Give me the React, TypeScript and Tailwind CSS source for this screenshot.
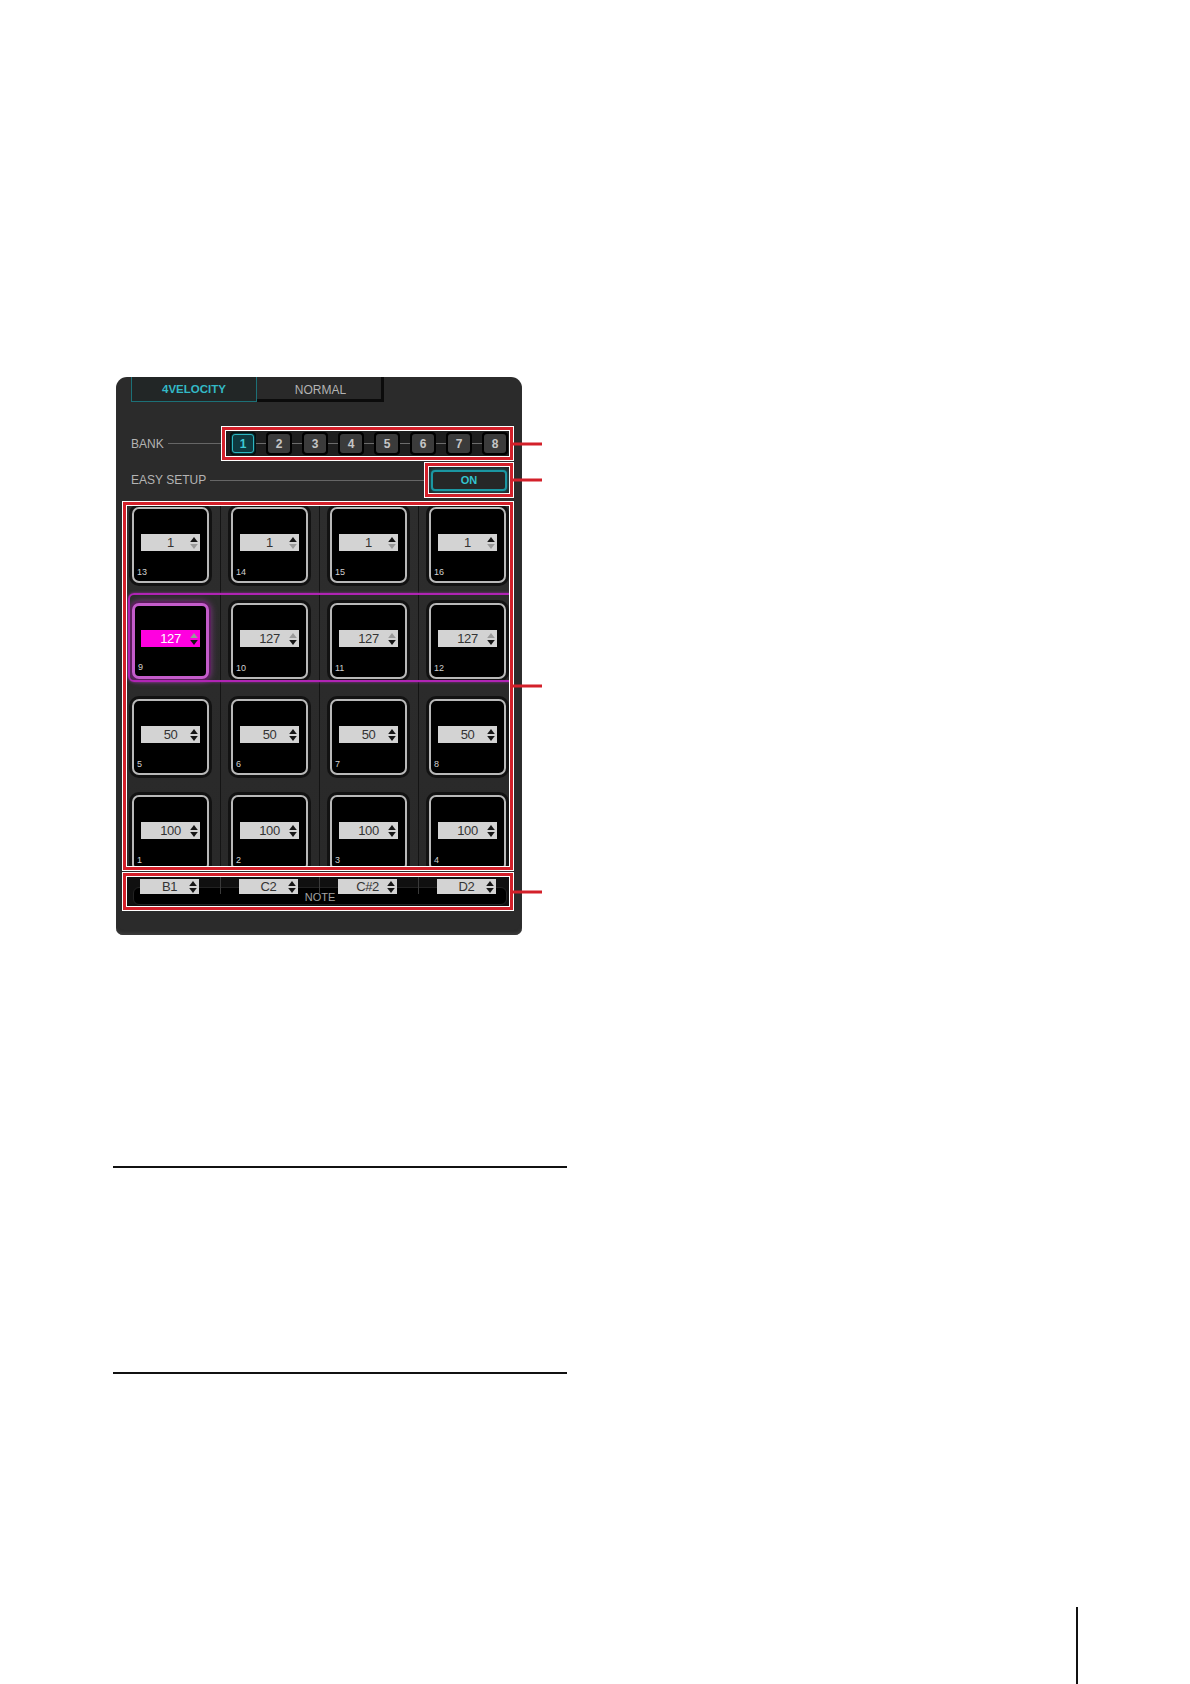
import React from "react";

const FONT = "font-['Liberation_Sans',Arial,sans-serif]";

function Spin({ up = "#151515", down = "#151515" }: { up?: string; down?: string }) {
  return (
    <svg width="8" height="13" viewBox="0 0 8 13" className="block">
      <path d="M4 0.5 L7.8 5.5 L0.2 5.5 Z" fill={up} />
      <path d="M0.2 7.5 L7.8 7.5 L4 12.5 Z" fill={down} />
    </svg>
  );
}

function ValueBox({
  value,
  up,
  down,
  selected = false,
  h = "h-[17px]",
}: {
  value: string;
  up?: string;
  down?: string;
  selected?: boolean;
  h?: string;
}) {
  return (
    <div
      className={`relative w-[59px] ${h} flex items-center justify-center ${
        selected ? "bg-[#ff00e0] text-white" : "bg-[#d3d3d3] text-[#333]"
      }`}
    >
      <span className="text-[13px] leading-none tracking-[-0.4px]">{value}</span>
      <div className="absolute right-[2px] top-1/2 -translate-y-1/2">
        <Spin up={up} down={down} />
      </div>
    </div>
  );
}

function RedBox({
  className = "",
  children,
}: {
  className?: string;
  children?: React.ReactNode;
}) {
  return (
    <div className={`relative border-[3px] border-[#d3202a] ring-1 ring-white ${className}`}>
      <div className="w-full h-full border border-white">{children}</div>
      <div className="absolute left-[calc(100%+3px)] top-1/2 -translate-y-1/2 w-[29px] h-[3px] bg-[#d3202a]" />
    </div>
  );
}

type PadData = { n: number; v: string; up?: string; down?: string; sel?: boolean };

const GRAY = "#9a9a9a";

const rows: PadData[][] = [
  [13, 14, 15, 16].map((n) => ({ n, v: "1", down: GRAY })),
  [9, 10, 11, 12].map((n) => ({ n, v: "127", up: GRAY, sel: n === 9 })),
  [5, 6, 7, 8].map((n) => ({ n, v: "50" })),
  [1, 2, 3, 4].map((n) => ({ n, v: "100" })),
];

function Pad({ p }: { p: PadData }) {
  return (
    <div
      className={`w-[77px] h-[76px] shrink-0 rounded-[7px] bg-black flex flex-col items-center ${
        p.sel
          ? "border-[3px] border-[#c45ccb] shadow-[0_0_0_2px_#5a1f5c,0_0_6px_2px_rgba(190,70,200,0.55)] pt-[24px]"
          : "border-2 border-[#b9b9b9] shadow-[0_0_0_3px_#121212] pt-[25px]"
      }`}
    >
      <ValueBox value={p.v} up={p.up} down={p.down} selected={p.sel} />
      <span className="self-start mt-auto pl-[3px] pb-[4px] text-[9px] leading-none text-[#d0d0d0]">
        {p.n}
      </span>
    </div>
  );
}

function Panel() {
  const cols = [0, 1, 2, 3];
  const notes = ["B1", "C2", "C#2", "D2"];
  return (
    <div
      className={`${FONT} w-[406px] h-[558px] rounded-t-[11px] rounded-b-[7px] bg-[#2b2b2b] flex flex-col shadow-[inset_0_-3px_3px_-1px_#3c3c3c]`}
    >
      {/* tabs */}
      <div className="flex pl-[15px] h-[25px] shrink-0">
        <div className="w-[126px] h-full border border-t-0 border-[#1c7077] bg-[#222626] flex items-center justify-center pt-[2px] text-[11.5px] font-bold text-[#33b9c5]">
          4VELOCITY
        </div>
        <div className="w-[127px] h-full border-r-[3px] border-b-[3px] border-[#0b0b0b] bg-[#292929] flex items-center justify-center pt-[3px] text-[12px] text-[#b3b3b3] pl-[3px]">
          NORMAL
        </div>
      </div>

      {/* BANK */}
      <div className="mt-[25px] h-[33px] flex items-center pl-[15px] pr-[9px] shrink-0">
        <span className="text-[12px] text-[#b4b4b4] leading-none">BANK</span>
        <div className="flex-1 h-px bg-[#666] ml-[4px]" />
        <RedBox className="w-[291px] h-[33px]">
          <div className="w-full h-full bg-[#1e1e1e] flex items-center pl-[4px]">
            {[1, 2, 3, 4, 5, 6, 7, 8].map((n, i) => (
              <React.Fragment key={n}>
                {i > 0 && <div className="w-[10px] h-px bg-[#6c6c6c]" />}
                <div className="p-[2px] rounded-[4px] bg-black">
                  <div
                    className={`w-[22px] h-[19px] rounded-[3px] flex items-center justify-center text-[12px] font-bold leading-none ${
                      n === 1
                        ? "border-[1.5px] border-[#2cb6c1] bg-[#0e3a40] text-[#3ccad6] shadow-[0_0_3px_#1b8d96]"
                        : "bg-[#3b3b3b] text-[#c6c6c6]"
                    }`}
                  >
                    {n}
                  </div>
                </div>
              </React.Fragment>
            ))}
          </div>
        </RedBox>
      </div>

      {/* EASY SETUP */}
      <div className="mt-[3px] h-[34px] flex items-center pl-[15px] pr-[9px] shrink-0">
        <span className="text-[12px] text-[#b4b4b4] leading-none">EASY SETUP</span>
        <div className="flex-1 h-px bg-[#666] ml-[4px]" />
        <RedBox className="w-[88px] h-[34px]">
          <div className="w-full h-full bg-[#232323] flex items-center justify-center">
            <div className="w-[76px] h-[21px] rounded-[4px] border-2 border-[#1b97a2] bg-[#262727] shadow-[0_0_4px_#157a83] flex items-center justify-center text-[11px] font-bold text-[#33c3cf] leading-none">
              ON
            </div>
          </div>
        </RedBox>
      </div>

      {/* Pads grid */}
      <div className="mt-[5px] ml-[7px] shrink-0">
        <RedBox className="w-[390px] h-[368px]">
          <div className="relative w-full h-full overflow-hidden bg-[#2a2a2a]">
            <div className="flex ml-[-6px] h-full">
              {cols.map((c) => (
                <div
                  key={c}
                  className={`w-[99px] shrink-0 h-full flex flex-col gap-[20px] pt-[1px] bg-gradient-to-b from-[#2d2d2d] to-[#292929] ${
                    c === 0 ? "pl-[11px]" : "pl-[10px] border-l border-[#141414]"
                  }`}
                >
                  {rows.map((r, ri) => (
                    <Pad key={ri} p={r[c]} />
                  ))}
                </div>
              ))}
            </div>
            <div className="absolute left-[1px] top-[87px] w-[392px] h-[89px] rounded-[6px] border-2 border-[#b024b4] shadow-[0_0_3px_rgba(200,60,210,0.6)] pointer-events-none" />
          </div>
        </RedBox>
      </div>

      {/* NOTE row */}
      <div className="mt-[3px] ml-[7px] shrink-0">
        <RedBox className="w-[390px] h-[37px]">
          <div className="w-full h-full overflow-hidden bg-[#101010] flex flex-col">
            <div className="relative z-10 flex ml-[-6px] h-[17px] shrink-0">
              {cols.map((c) => (
                <div
                  key={c}
                  className={`w-[99px] shrink-0 h-full pt-[2px] ${
                    c === 0 ? "pl-[19px]" : "pl-[18px] border-l border-[#3a3a3a]"
                  }`}
                >
                  <ValueBox value={notes[c]} h="h-[15px]" />
                </div>
              ))}
            </div>
            <div className="mt-[-7px] ml-[6px] w-[374px] h-[18px] rounded-[6px] bg-black border border-[#222] flex items-end justify-center pb-[1px]">
              <span className="text-[11px] leading-none text-[#a3a3a3]">NOTE</span>
            </div>
          </div>
        </RedBox>
      </div>
    </div>
  );
}

export default function App() {
  return (
    <div className="w-[1190px] h-[1684px] bg-white overflow-hidden">
      <div className="pt-[377px] pl-[116px]">
        <Panel />
      </div>
      <div className="mt-[231px] ml-[113px] w-[454px] h-[2px] bg-[#111]" />
      <div className="mt-[204px] ml-[113px] w-[454px] h-[2px] bg-[#111]" />
      <div className="mt-[233px] ml-[1076px] w-[2px] h-[77px] bg-[#111]" />
    </div>
  );
}
